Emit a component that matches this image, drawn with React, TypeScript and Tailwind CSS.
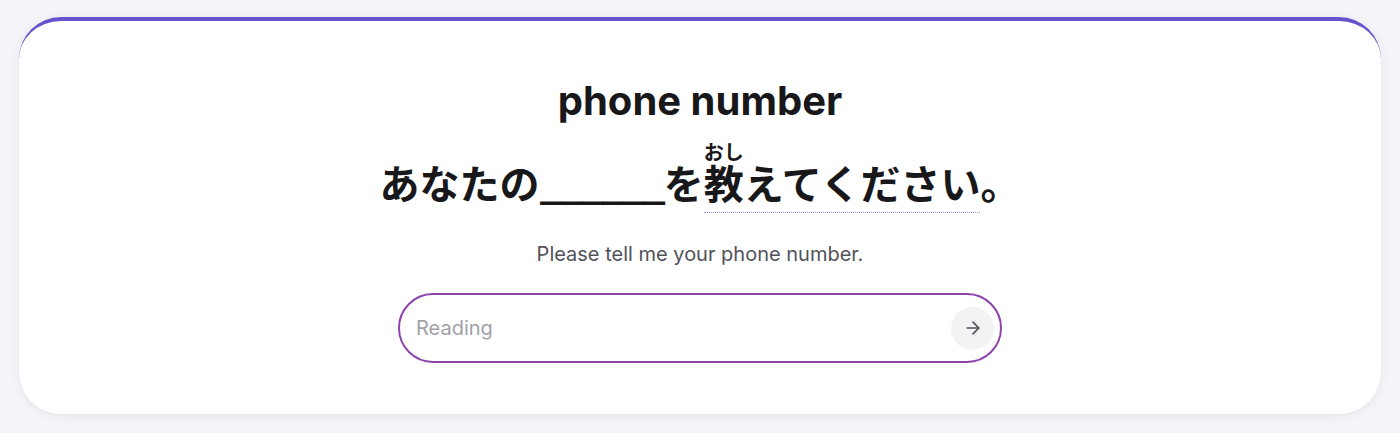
import { ArrowRight } from "lucide-react"

export default function App() {
  return (
    <div className="min-h-[433px] bg-[#f5f5f9] px-[19px] pt-[17px] pb-[19px] font-['Inter','Noto_Sans_CJK_JP',sans-serif]">
      <div className="rounded-[42px] border-t-4 border-[#6553cc] bg-white shadow-[0_2px_10px_rgba(30,30,60,0.08)] pt-[56px] pb-[51px] flex flex-col items-center">
        <h1 className="text-[40px] leading-[48px] font-bold text-[#18181b]">
          phone number
        </h1>
        <p className="mt-[17px] text-[40px] leading-[56px] font-bold text-[#18181b] font-['Noto_Sans_CJK_JP',sans-serif]">
          あなたの<span className="tracking-[-0.05em]">______</span>を
          <span className="border-b border-dotted border-[#9d8ff6] pb-[1px]">
            <ruby>
              教<rt className="text-[20px] font-bold leading-[24px] text-[#18181b]">おし</rt>
            </ruby>
            えてください
          </span>
          。
        </p>
        <p className="mt-[30px] text-[20px] leading-[28px] text-[#52525b]">
          Please tell me your phone number.
        </p>
        <div className="mt-[25px] w-[604px] h-[70px] rounded-full border-2 border-[#8e44ad] flex items-center pl-[16px] pr-[6px]">
          <input
            className="flex-1 bg-transparent outline-none text-[20px] text-[#18181b] placeholder:text-[#a1a1aa]"
            placeholder="Reading"
          />
          <button className="w-[43px] h-[43px] rounded-full bg-[#f3f3f4] flex items-center justify-center text-[#52525b]">
            <ArrowRight className="w-[20px] h-[20px]" strokeWidth={2} />
          </button>
        </div>
      </div>
    </div>
  )
}
